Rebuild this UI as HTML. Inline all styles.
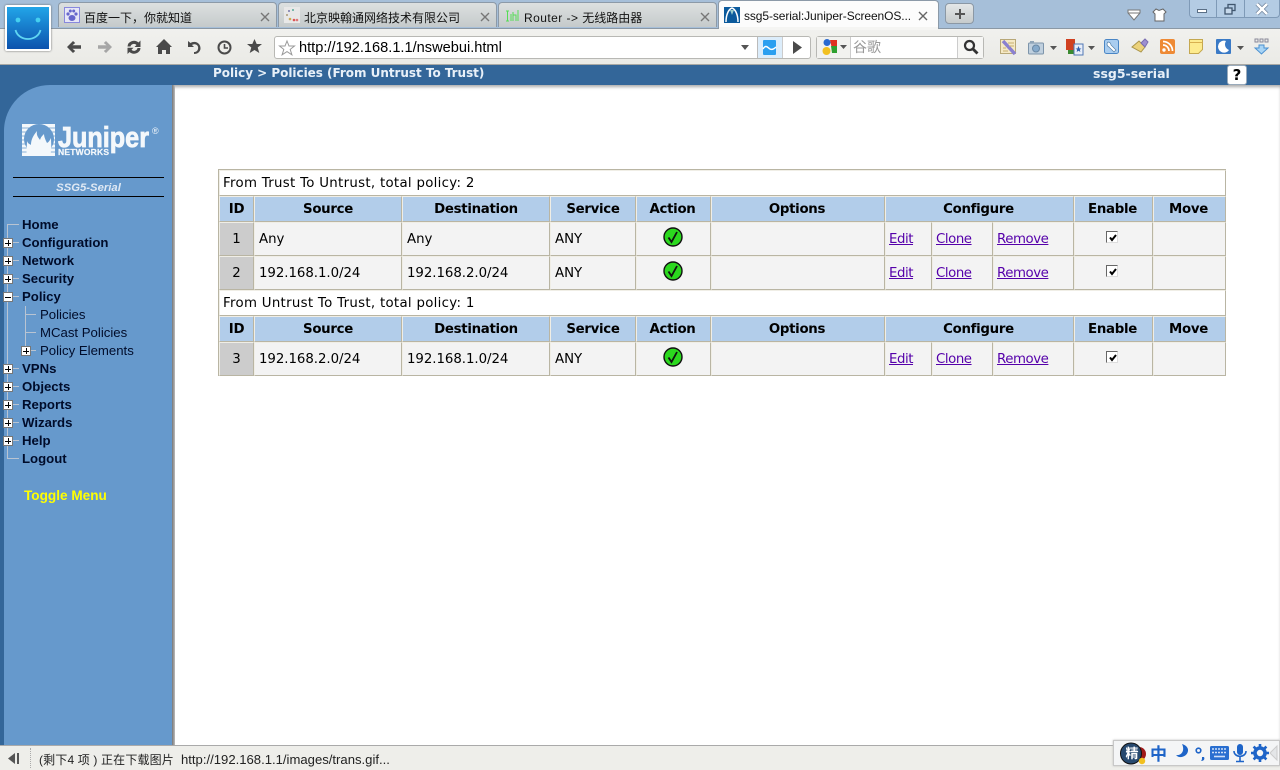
<!DOCTYPE html>
<html><head><meta charset="utf-8"><title>ssg5-serial</title>
<style>
html,body{margin:0;padding:0;width:1280px;height:770px;overflow:hidden;background:#fff;font-family:"Liberation Sans","Noto Sans CJK SC",sans-serif}
.a{position:absolute}
svg{position:absolute;overflow:visible}
.tab{position:absolute;top:2px;height:25px;width:219px;background:linear-gradient(#dde0e0,#c5cacb);border:1px solid #8c9aa8;border-bottom:none;border-radius:4px 4px 0 0;box-sizing:border-box;font-size:12px;color:#111;white-space:nowrap}
.tab span{position:absolute;top:7px;left:25px;line-height:16px}
.tab svg.cl{left:201px;top:9px}
table{position:absolute;left:218px;top:169px;width:1008px;border-collapse:separate;border-spacing:0;table-layout:fixed;font:13.33px "DejaVu Sans",sans-serif;color:#000;border-top:1px solid #b9b5a3;border-left:1px solid #b9b5a3}
td{box-sizing:border-box;border-right:1px solid #b9b5a3;border-bottom:1px solid #b9b5a3;border-left:1px solid #f0eee6;border-top:1px solid #f0eee6;padding:0 0 0 4px;background:#f3f3f3;white-space:nowrap;letter-spacing:-.05px}
tr.t td{background:#fff;height:26px;padding-left:3px;letter-spacing:.3px}
tr.h td{background:#b2cdea;height:26px;font-weight:bold;text-align:center;padding:0;letter-spacing:-.3px}
tr.h td:nth-child(n+5){padding-right:2px}
tr.r td{height:34px;padding-top:1px}
tr.r td:nth-child(n+7){padding-left:3px}
tr.r td.c:nth-child(n+7){padding-left:0}
td.i{background:#cccccc;text-align:center;padding:0}
td.c{text-align:center;padding:0;position:relative}
a{color:#5500aa;text-decoration:underline;letter-spacing:-.45px}
.m{position:absolute;left:22px;font:bold 13.2px/18px "Liberation Sans",sans-serif;color:#000c2a}
.s{position:absolute;left:40px;font:13.2px/18px "Liberation Sans",sans-serif;color:#000c2a}
.x{position:absolute;left:3px;width:8px;height:8px;border:1px solid #777;background:#fff;box-sizing:content-box}
.x:before{content:"";position:absolute;left:1px;right:1px;top:3.5px;height:1px;background:#000}
.p:after{content:"";position:absolute;top:1px;bottom:1px;left:3.5px;width:1px;background:#000}
.l{position:absolute;background:#b9c4d2}
.ck{position:absolute;left:31px;top:8px;width:10px;height:10px;background:#fff;border:1px solid #666;border-right-color:#ddd;border-bottom-color:#ddd}
</style></head><body>

<!-- tab strip -->
<div class="a" style="left:0;top:0;width:1280px;height:28px;background:#a6bfd9"></div>
<div class="tab" style="left:58px"><svg style="left:5px;top:4px" width="16" height="16"><rect x=".5" y=".5" width="15" height="15" fill="#e6e6f6" stroke="#8888dd"/><ellipse cx="8" cy="11" rx="3.5" ry="3" fill="#6666cc"/><circle cx="4" cy="7" r="1.6" fill="#6666cc"/><circle cx="12" cy="7" r="1.6" fill="#6666cc"/><circle cx="6.3" cy="4" r="1.5" fill="#6666cc"/><circle cx="9.7" cy="4" r="1.5" fill="#6666cc"/></svg><span>百度一下，你就知道</span><svg class="cl" width="10" height="10"><path d="M1 1l8 8M9 1L1 9" stroke="#777" stroke-width="1.4"/></svg></div>
<div class="tab" style="left:278px"><svg style="left:5px;top:4px" width="16" height="16"><rect width="16" height="16" fill="#e8e8e8"/><circle cx="9" cy="3" r="1" fill="#5a9"/><circle cx="5" cy="4" r="1" fill="#77a"/><circle cx="3" cy="8" r="1" fill="#a97"/><circle cx="6" cy="12" r="1.3" fill="#ca5"/><circle cx="10" cy="13" r="1.3" fill="#d55"/><circle cx="13" cy="13" r="1.3" fill="#d77"/></svg><span>北京映翰通网络技术有限公司</span><svg class="cl" width="10" height="10"><path d="M1 1l8 8M9 1L1 9" stroke="#777" stroke-width="1.4"/></svg></div>
<div class="tab" style="left:498px"><svg style="left:6px;top:4px" width="16" height="16"><path d="M1 4h3M2.5 4v10M1 14h3M6 7v7M8 5v9M8 8h3v6M13 3v11" stroke="#55dd55" fill="none"/></svg><span><span style="position:static;letter-spacing:.45px">Router -&gt; </span>无线路由器</span><svg class="cl" width="10" height="10"><path d="M1 1l8 8M9 1L1 9" stroke="#777" stroke-width="1.4"/></svg></div>
<div class="tab" style="left:718px;top:0;height:28px;width:221px;background:#fcfcfc;border-color:#8c9aa8;z-index:2"><svg style="left:5px;top:6px" width="16" height="16"><rect width="16" height="16" fill="#0b5a9c"/><path d="M2 15C2 7 5 2 8 1c3 1 6 6 6 14" fill="none" stroke="#fff" stroke-width="1.5"/><path d="M6 3l2 5 2-5" fill="#9cc" /></svg><span style="top:7px;left:25px;letter-spacing:-.1px">ssg5-serial:Juniper-ScreenOS...</span><svg class="cl" style="left:199px;top:10px" width="10" height="10"><path d="M1 1l8 8M9 1L1 9" stroke="#666" stroke-width="1.4"/></svg></div>
<div class="a" style="left:945px;top:3px;width:29px;height:21px;box-sizing:border-box;background:linear-gradient(#e4e7e8,#c6cbcc);border:1px solid #8b98a5;border-radius:4px"><svg style="left:9px;top:5px" width="10" height="10"><path d="M5 0v10M0 5h10" stroke="#555" stroke-width="2"/></svg></div>
<svg style="left:1127px;top:9px" width="14" height="13"><path d="M1 1h12v3l-6 7-6-7z" fill="#fff" stroke="#777"/><path d="M1 4h12" stroke="#777"/></svg>
<svg style="left:1152px;top:8px" width="15" height="14"><path d="M4 1l3 1.5L11 1l3 3-2 2v7H3V6L1 4z" fill="#fff" stroke="#666"/></svg>
<div class="a" style="left:1189px;top:0;width:91px;height:18px;box-sizing:border-box;background:#b4cce4;border:1px solid #7f9ab7;border-top:none;border-radius:0 0 4px 4px"></div>
<div class="a" style="left:1216px;top:0;width:1px;height:18px;background:#7f9ab7"></div>
<div class="a" style="left:1244px;top:0;width:1px;height:18px;background:#7f9ab7"></div>
<svg style="left:1197px;top:9px" width="12" height="4"><rect x=".5" y=".5" width="9" height="3" fill="#fff" stroke="#5a6f86"/></svg>
<svg style="left:1224px;top:4px" width="13" height="11"><rect x="4" y=".5" width="7" height="6" fill="none" stroke="#40566e" stroke-width="1.3"/><rect x="1" y="4" width="7" height="6" fill="#c6d8ea" stroke="#40566e" stroke-width="1.3"/></svg>
<svg style="left:1256px;top:3px" width="12" height="12"><path d="M1 1l10 10M11 1L1 11" stroke="#6c8099" stroke-width="4"/><path d="M1 1l10 10M11 1L1 11" stroke="#fff" stroke-width="2.6"/></svg>

<!-- toolbar -->
<div class="a" style="left:0;top:28px;width:1280px;height:37px;background:linear-gradient(#f1f1ee,#eaeae6);border-top:1px solid #8b98a5;border-bottom:1px solid #a8a8a4;box-sizing:border-box"></div>
<div class="a" style="left:719px;top:27px;width:219px;height:3px;background:#f5f5f3;z-index:3"></div>
<!-- logo -->
<div class="a" style="left:5px;top:5px;width:46px;height:46px;box-sizing:border-box;border:2px solid #fff;border-radius:2px;background:linear-gradient(#22a5e8,#0c52ad);box-shadow:0 0 2px #666;z-index:4"><svg style="left:0;top:0" width="42" height="42"><circle cx="11" cy="13" r="2.4" fill="#45d0f0"/><circle cx="31" cy="13" r="2.4" fill="#45d0f0"/><path d="M8.5 23c3 12 22 12 25 0" fill="none" stroke="#5fd6f2" stroke-width="1.8"/></svg></div>
<!-- nav icons -->
<svg style="left:66px;top:40px" width="16" height="14"><path d="M1 7l6-6 2.200 2L6.500 5.200H15v3.600H6.500L9.200 11 7 13z" fill="#4a4a4a"/></svg>
<svg style="left:97px;top:40px" width="16" height="14"><path d="M15 7L9 1 6.800 3l2.700 2.200H1v3.600h8.500L6.800 11 9 13z" fill="#a6a6a6"/></svg>
<svg style="left:126px;top:39px" width="16" height="16"><path d="M1.500 7.500A6.500 6 0 0 1 12.500 3.500L14.500 1.500V8H8.500l2-2A3.500 3.500 0 0 0 4.500 7.500zM14.500 9A6.500 6 0 0 1 3.500 13L1.500 15V8.700H7.500l-2 2A3.500 3.500 0 0 0 11.500 9z" fill="#4a4a4a"/></svg>
<svg style="left:156px;top:39px" width="16" height="15"><path d="M8 0L0 8h2v7h4v-4h4v4h4V8h2z" fill="#4a4a4a"/></svg>
<svg style="left:186px;top:39px" width="16" height="16"><path d="M2 2v6h6L6 6c3-2 7 0 6 4-.5 2-2 3-4 3v2c4 0 6-2.5 6.500-5C15 4 9 1 4.500 4z" fill="#4a4a4a"/></svg>
<svg style="left:217px;top:40px" width="15" height="15"><circle cx="7.5" cy="7.5" r="6" fill="none" stroke="#4a4a4a" stroke-width="2"/><path d="M7.500 4v4H11" fill="none" stroke="#4a4a4a" stroke-width="1.6"/></svg>
<svg style="left:247px;top:39px" width="15" height="15"><path d="M7.500 0l2.200 5H15l-4.300 3.500L12.300 14 7.500 11l-4.800 3 1.600-5.500L0 5h5.300z" fill="#4a4a4a"/></svg>
<!-- address -->
<div class="a" style="left:274px;top:36px;width:537px;height:23px;box-sizing:border-box;background:#fff;border:1px solid #b8b8b4;border-radius:3px"></div>
<svg style="left:279px;top:40px" width="16" height="16"><path d="M8 1l2 5h5.500l-4.300 3.400 1.700 5.400L8 11.600l-4.900 3.200 1.700-5.400L.5 6H6z" fill="#fff" stroke="#999"/></svg>
<div class="a" style="left:299px;top:39px;font:14.6px/18px 'Liberation Sans',sans-serif;color:#000">http://192.168.1.1/nswebui.html</div>
<svg style="left:741px;top:45px" width="9" height="5"><path d="M0 0h8L4 5z" fill="#555"/></svg>
<div class="a" style="left:757px;top:37px;width:26px;height:21px;background:#dcedfb;border-left:1px solid #bbb;border-right:1px solid #ccc;box-sizing:border-box"></div>
<svg style="left:763px;top:40px" width="14" height="15"><rect width="13" height="15" rx="1" fill="#2b9ff0"/><path d="M0 9c3-5 5-1 7 0s4 0 6-2" fill="none" stroke="#fff" stroke-width="1.5"/></svg>
<svg style="left:793px;top:41px" width="10" height="13"><path d="M0 0l9 6.500L0 13z" fill="#4a4a4a"/></svg>
<!-- search -->
<div class="a" style="left:816px;top:36px;width:168px;height:23px;box-sizing:border-box;background:#fff;border:1px solid #b8b8b4;border-radius:3px"></div>
<div class="a" style="left:817px;top:37px;width:34px;height:21px;background:#f2f2ef;border-right:1px solid #ccc;box-sizing:border-box"></div>
<div class="a" style="left:957px;top:37px;width:26px;height:21px;background:#f6f6f4;border-left:1px solid #ccc;box-sizing:border-box"></div>
<svg style="left:821px;top:38px" width="18" height="18"><circle cx="6" cy="4.500" r="3.500" fill="#2a6ad0"/><path d="M9 2h7v9H11z" fill="#e03020"/><path d="M10 8h6v7h-5z" fill="#2ea030"/><circle cx="5.500" cy="13" r="4" fill="#f2c020"/></svg>
<svg style="left:840px;top:45px" width="8" height="5"><path d="M0 0h7L3.500 4z" fill="#555"/></svg>
<div class="a" style="left:853px;top:38px;font:14px/18px 'Noto Sans CJK SC',sans-serif;color:#999">谷歌</div>
<svg style="left:963px;top:39px" width="16" height="16"><circle cx="6.5" cy="6.5" r="4.500" fill="none" stroke="#333" stroke-width="2.2"/><path d="M10 10l4.500 4.500" stroke="#333" stroke-width="2.8"/></svg>
<!-- extension icons -->
<svg style="left:1000px;top:39px" width="17" height="16"><rect x=".5" y=".5" width="15" height="14" fill="#f5e9c6" stroke="#b8a878"/><path d="M3 2l12 13" stroke="#8a80d0" stroke-width="3.5"/><path d="M8 4h6M9 7h5M3 9h3M3 12h5" stroke="#c8b070"/></svg>
<svg style="left:1028px;top:40px" width="17" height="15"><rect x=".5" y="3" width="15" height="11" rx="1" fill="#c0d0de" stroke="#7d94aa"/><circle cx="8" cy="8.500" r="3.500" fill="#86aacb" stroke="#6a88a5"/><rect x="2" y="1" width="4" height="2" fill="#90a5b8"/></svg>
<svg style="left:1050px;top:46px" width="7" height="4"><path d="M0 0h7L3.500 4z" fill="#555"/></svg>
<svg style="left:1066px;top:39px" width="19" height="17"><rect x="0" y="0" width="9" height="11" fill="#d04020"/><rect x="2" y="11" width="6" height="4" fill="#3a8a30"/><rect x="8" y="5" width="9" height="11" fill="#e8eef8" stroke="#5077b5"/><path d="M12.500 7l1 2.500h2l-1.700 1.300.6 2.200-1.900-1.300-1.900 1.300.6-2.200-1.700-1.300h2z" fill="#3060b0"/></svg>
<svg style="left:1088px;top:46px" width="7" height="4"><path d="M0 0h7L3.500 4z" fill="#555"/></svg>
<svg style="left:1104px;top:39px" width="15" height="15"><rect x=".5" y=".5" width="14" height="14" rx="2" fill="#a9cdf0" stroke="#4a86c5"/><path d="M4 3a3 3 0 0 0 1 5l5 5 2-2-5-5a3 3 0 0 0-3-3z" fill="#fff" stroke="#5580a8" stroke-width=".7"/></svg>
<svg style="left:1132px;top:39px" width="16" height="15"><path d="M0 8l7-6 6 6-4 5z" fill="#ecd27a" stroke="#a9944a"/><path d="M9 4l4-4 3 3-3 5z" fill="#9d8fd0" stroke="#7a6db0"/></svg>
<svg style="left:1160px;top:39px" width="15" height="15"><rect width="15" height="15" rx="2" fill="#ee8a35"/><circle cx="4" cy="11" r="1.7" fill="#fff"/><path d="M3 6a6 6 0 0 1 6 6M3 2.500A9.500 9.500 0 0 1 12.500 12" fill="none" stroke="#fff" stroke-width="1.7"/></svg>
<svg style="left:1189px;top:39px" width="14" height="15"><path d="M.5.500h13v10l-4 4h-9z" fill="#fdeb8e" stroke="#c4a850"/><path d="M.5 3.500h13" stroke="#d8b050"/></svg>
<svg style="left:1216px;top:39px" width="15" height="15"><rect width="15" height="15" rx="1" fill="#3a7ac6"/><path d="M10 2a6 6 0 1 0 3 9A6 6 0 0 1 10 2z" fill="#fff"/></svg>
<svg style="left:1237px;top:46px" width="7" height="4"><path d="M0 0h7L3.500 4z" fill="#555"/></svg>
<svg style="left:1254px;top:39px" width="15" height="16"><rect x="1" y="0" width="3" height="3" fill="none" stroke="#889"/><rect x="6" y="0" width="3" height="3" fill="none" stroke="#889"/><rect x="11" y="0" width="3" height="3" fill="none" stroke="#889"/><path d="M5 6h5v3h4l-6.500 6L1 9h4z" fill="#a8d4f5" stroke="#4a90d0"/></svg>

<!-- app header -->
<div class="a" style="left:0;top:65px;width:1280px;height:680px;background:#336699"></div>
<div class="a" style="left:172px;top:85px;width:1108px;height:660px;background:#fff;box-shadow:inset 0 3px 3px -1px #aaa"></div>
<div class="a" style="left:213px;top:66px;font:bold 12px/15px 'DejaVu Sans',sans-serif;color:#e8f0f8;letter-spacing:-.03px">Policy &gt; Policies (From Untrust To Trust)</div>
<div class="a" style="left:1093px;top:66px;font:bold 12.5px/15px 'DejaVu Sans',sans-serif;color:#e8f0f8">ssg5-serial</div>
<div class="a" style="left:1228px;top:66px;width:18px;height:18px;background:#fff;border-radius:2px;box-shadow:0 0 0 1px #9ab;text-align:center;font:bold 15px/18px 'DejaVu Sans',sans-serif;color:#000">?</div>
<!-- sidebar -->
<div class="a" style="left:4px;top:85px;width:168px;height:660px;background:#6699cc;border-radius:46px 0 0 0"></div>
<div class="a" style="left:172px;top:85px;width:3px;height:660px;background:linear-gradient(90deg,#777,#bbb)"></div>
<!-- juniper logo -->
<svg style="left:21px;top:124px" width="140" height="34">
<rect x="1" y="0" width="33" height="32" fill="#f4f8fb"/>
<path d="M1 4h33M1 8h33M1 12h33M1 16h33M1 20h33M1 24h33M1 28h33" stroke="#6699cc" stroke-width=".7"/>
<circle cx="18" cy="15" r="15" fill="#6699cc"/>
<path d="M6 32c-1-6 0-9 0-15 1 3 3 3 4 4 0-4 1-8 6-14-1 5 2 7 3 9 1-3 2-4 4-6 0 3 2 7 3 9 2-1 3-3 4-5 0 6 1 11-1 18z" fill="#f4f8fb"/>
<text x="37" y="23" font-family="Liberation Sans" font-weight="bold" font-size="29" fill="#f4f8fb" stroke="#f4f8fb" stroke-width=".8" textLength="91" lengthAdjust="spacingAndGlyphs">Juniper</text>
<text x="37" y="31" font-family="Liberation Sans" font-weight="bold" font-size="8.5" fill="#f4f8fb" stroke="#f4f8fb" stroke-width=".2" textLength="51" lengthAdjust="spacing">NETWORKS</text>
<text x="131" y="10" font-family="Liberation Sans" font-size="9" fill="#f4f8fb">®</text>
</svg>
<div class="a" style="left:13px;top:177px;width:151px;height:1px;background:#000"></div>
<div class="a" style="left:13px;top:196px;width:151px;height:1px;background:#000"></div>
<div class="a" style="left:13px;top:181px;width:151px;text-align:center;font:italic bold 11.3px/14px 'Liberation Sans',sans-serif;color:#dfe9f4">SSG5-Serial</div>
<!-- tree lines -->
<div class="l" style="left:7px;top:224px;width:1px;height:225px"></div>
<div class="l" style="left:7px;top:224px;width:12px;height:1px"></div>
<div class="l" style="left:13px;top:242px;width:6px;height:1px"></div>
<div class="l" style="left:13px;top:260px;width:6px;height:1px"></div>
<div class="l" style="left:13px;top:278px;width:6px;height:1px"></div>
<div class="l" style="left:13px;top:296px;width:6px;height:1px"></div>
<div class="l" style="left:13px;top:368px;width:6px;height:1px"></div>
<div class="l" style="left:13px;top:386px;width:6px;height:1px"></div>
<div class="l" style="left:13px;top:404px;width:6px;height:1px"></div>
<div class="l" style="left:13px;top:422px;width:6px;height:1px"></div>
<div class="l" style="left:13px;top:440px;width:6px;height:1px"></div>
<div class="l" style="left:7px;top:458px;width:12px;height:1px"></div>
<div class="l" style="left:7px;top:449px;width:1px;height:9px"></div>
<div class="l" style="left:25px;top:306px;width:1px;height:40px"></div>
<div class="l" style="left:25px;top:314px;width:11px;height:1px"></div>
<div class="l" style="left:25px;top:332px;width:11px;height:1px"></div>
<div class="l" style="left:31px;top:350px;width:5px;height:1px"></div>
<div class="x p" style="top:238px"></div><div class="x p" style="top:256px"></div><div class="x p" style="top:274px"></div><div class="x" style="top:292px"></div>
<div class="x p" style="left:21px;top:346px"></div>
<div class="x p" style="top:364px"></div><div class="x p" style="top:382px"></div><div class="x p" style="top:400px"></div><div class="x p" style="top:418px"></div><div class="x p" style="top:436px"></div>
<div class="m" style="top:216px">Home</div><div class="m" style="top:234px">Configuration</div><div class="m" style="top:252px">Network</div><div class="m" style="top:270px">Security</div><div class="m" style="top:288px">Policy</div>
<div class="s" style="top:306px">Policies</div><div class="s" style="top:324px">MCast Policies</div><div class="s" style="top:342px">Policy Elements</div>
<div class="m" style="top:360px">VPNs</div><div class="m" style="top:378px">Objects</div><div class="m" style="top:396px">Reports</div><div class="m" style="top:414px">Wizards</div><div class="m" style="top:432px">Help</div><div class="m" style="top:450px">Logout</div>
<div class="m" style="left:24px;top:487px;color:#ffff00;font-size:13.6px">Toggle Menu</div>

<!-- tables -->
<table>
<colgroup><col style="width:35px"><col style="width:148px"><col style="width:148px"><col style="width:86px"><col style="width:75px"><col style="width:174px"><col style="width:47px"><col style="width:61px"><col style="width:81px"><col style="width:79px"><col style="width:73px"></colgroup>
<tr class="t"><td colspan="11">From Trust To Untrust, total policy: 2</td></tr>
<tr class="h"><td>ID</td><td>Source</td><td>Destination</td><td>Service</td><td>Action</td><td>Options</td><td colspan="3">Configure</td><td>Enable</td><td>Move</td></tr>
<tr class="r"><td class="i">1</td><td>Any</td><td>Any</td><td>ANY</td><td class="c"><svg style="left:26px;top:4px" width="20" height="20"><circle cx="10" cy="10" r="9" fill="#2bd81e" stroke="#111" stroke-width="1.4"/><path d="M5.500 10.500l3 4.500L14 5" fill="none" stroke="#111" stroke-width="1.8"/></svg></td><td></td><td><a>Edit</a></td><td><a>Clone</a></td><td><a>Remove</a></td><td class="c"><div class="ck"></div><svg style="left:34px;top:11px" width="9" height="8"><path d="M1 3.500l2 2.500 4-5" fill="none" stroke="#000" stroke-width="2"/></svg></td><td></td></tr>
<tr class="r"><td class="i">2</td><td>192.168.1.0/24</td><td>192.168.2.0/24</td><td>ANY</td><td class="c"><svg style="left:26px;top:4px" width="20" height="20"><circle cx="10" cy="10" r="9" fill="#2bd81e" stroke="#111" stroke-width="1.4"/><path d="M5.500 10.500l3 4.500L14 5" fill="none" stroke="#111" stroke-width="1.8"/></svg></td><td></td><td><a>Edit</a></td><td><a>Clone</a></td><td><a>Remove</a></td><td class="c"><div class="ck"></div><svg style="left:34px;top:11px" width="9" height="8"><path d="M1 3.500l2 2.500 4-5" fill="none" stroke="#000" stroke-width="2"/></svg></td><td></td></tr>
<tr class="t"><td colspan="11">From Untrust To Trust, total policy: 1</td></tr>
<tr class="h"><td>ID</td><td>Source</td><td>Destination</td><td>Service</td><td>Action</td><td>Options</td><td colspan="3">Configure</td><td>Enable</td><td>Move</td></tr>
<tr class="r"><td class="i">3</td><td>192.168.2.0/24</td><td>192.168.1.0/24</td><td>ANY</td><td class="c"><svg style="left:26px;top:4px" width="20" height="20"><circle cx="10" cy="10" r="9" fill="#2bd81e" stroke="#111" stroke-width="1.4"/><path d="M5.500 10.500l3 4.500L14 5" fill="none" stroke="#111" stroke-width="1.8"/></svg></td><td></td><td><a>Edit</a></td><td><a>Clone</a></td><td><a>Remove</a></td><td class="c"><div class="ck"></div><svg style="left:34px;top:11px" width="9" height="8"><path d="M1 3.500l2 2.500 4-5" fill="none" stroke="#000" stroke-width="2"/></svg></td><td></td></tr>
</table>

<!-- status bar -->
<div class="a" style="left:0;top:745px;width:1280px;height:25px;background:#eeeeea;border-top:1px solid #aaa;box-sizing:border-box"></div>
<svg style="left:8px;top:753px" width="13" height="11"><path d="M0 5.500L7 0v11z" fill="#555"/><rect x="9" y="0" width="2" height="11" fill="#555"/></svg>
<div class="a" style="left:30px;top:748px;width:1px;height:20px;border-left:1px dotted #aaa"></div>
<div class="a" style="left:39px;top:752px;font:12px/17px 'Liberation Sans','Noto Sans CJK SC',sans-serif;color:#222;white-space:nowrap;letter-spacing:.15px">(剩下4 项 ) 正在下载图片</div>
<div class="a" style="left:181px;top:751px;font:13.1px/17px 'Liberation Sans',sans-serif;color:#222;white-space:nowrap">http://192.168.1.1/images/trans.gif...</div>
<!-- IME -->
<div class="a" style="left:1113px;top:740px;width:167px;height:26px;background:#f4f5f6;border:1px solid #c8c8c8;box-sizing:border-box;box-shadow:0 0 2px #bbb"></div>
<svg style="left:1119px;top:742px" width="28" height="24"><circle cx="20" cy="12" r="7" fill="#a01818"/><circle cx="12" cy="11.5" r="10.500" fill="#27496f" stroke="#111"/><circle cx="23" cy="19" r="3.200" fill="#f2c020"/></svg>
<div class="a" style="left:1121px;top:745px;width:22px;text-align:center;font:bold 13px/16px 'Noto Sans CJK SC',sans-serif;color:#fff">精</div>
<div class="a" style="left:1150px;top:743px;font:bold 17px/20px 'Noto Sans CJK SC',sans-serif;color:#1e64c8">中</div>
<svg style="left:1172px;top:744px" width="16" height="17"><path d="M10 0c3 6 0 12-6 11 3 4 11 2 12-4 .5-3-2-6-6-7z" fill="#1e64c8"/></svg>
<svg style="left:1195px;top:747px" width="13" height="15"><circle cx="3.5" cy="3.500" r="2.300" fill="none" stroke="#1e64c8" stroke-width="1.6"/><path d="M9 10c1 2 0 4-3 4 1-1 1-2 1-4z" fill="#1e64c8"/></svg>
<svg style="left:1210px;top:746px" width="19" height="14"><rect width="19" height="14" rx="1.5" fill="#2a6fd0"/><path d="M2 3h15M2 6.500h15" stroke="#cfe0f8" stroke-width="1.6" stroke-dasharray="2 1"/><path d="M4 10.500h11" stroke="#cfe0f8" stroke-width="1.6"/></svg>
<svg style="left:1233px;top:744px" width="14" height="19"><rect x="4" y="0" width="6" height="11" rx="3" fill="#1e64c8"/><path d="M1 7c0 7 12 7 12 0M7 13v4M3 17.500h8" fill="none" stroke="#1e64c8" stroke-width="1.6"/></svg>
<svg style="left:1251px;top:744px" width="18" height="18"><circle cx="9" cy="9" r="5" fill="none" stroke="#1e64c8" stroke-width="3.6"/><path d="M9 0v3.500M9 14.500V18M0 9h3.500M14.500 9H18M2.600 2.600l2.500 2.500M12.900 12.900l2.500 2.500M15.400 2.600l-2.500 2.500M5.100 12.900l-2.500 2.500" stroke="#1e64c8" stroke-width="2.6"/></svg>
<svg style="left:1270px;top:746px" width="8" height="14"><path d="M7 0v14L0 7z" fill="#e4e6e8" stroke="#ccc"/></svg>
</body></html>
